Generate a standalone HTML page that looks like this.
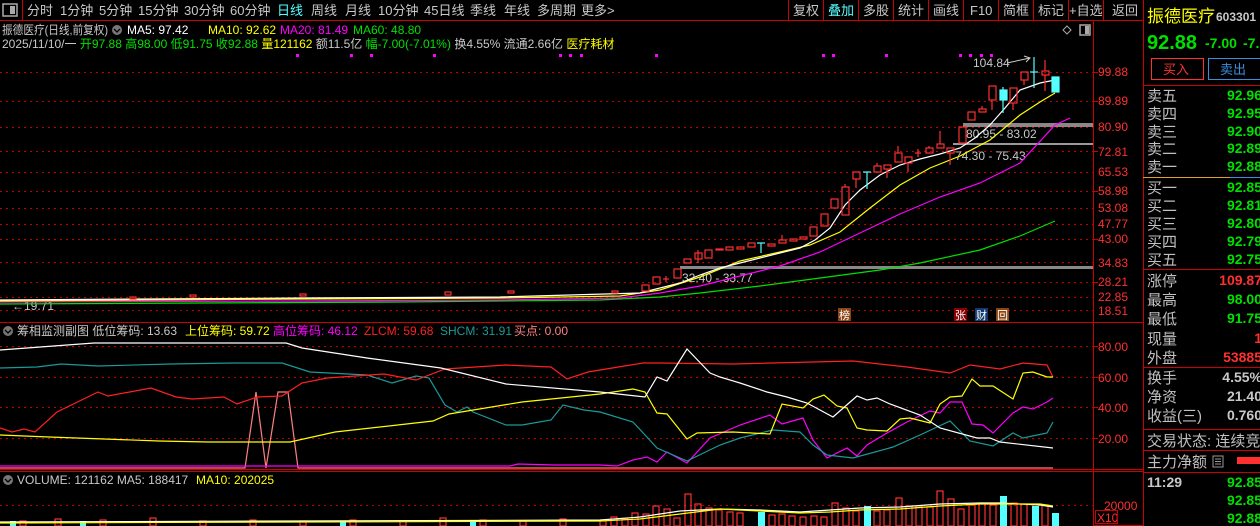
<!DOCTYPE html>
<html><head><meta charset="utf-8"><style>
html,body{margin:0;padding:0;background:#000;width:1260px;height:526px;overflow:hidden}
svg{display:block}
text{font-family:"Liberation Sans","Noto Sans CJK SC",sans-serif}
</style></head><body>
<svg width="1260" height="526" viewBox="0 0 1260 526" xmlns="http://www.w3.org/2000/svg">
<rect width="1260" height="526" fill="#000"/>
<g font-size="13" fill="#c8c8c8">
<rect x="3" y="4" width="14" height="12" fill="none" stroke="#aaa" stroke-width="1.5"/><rect x="10" y="6" width="5" height="8" fill="#aaa"/>
<line x1="22.5" y1="0" x2="22.5" y2="20" stroke="#c00" />
<text x="27" y="15">分时</text><text x="60" y="15">1分钟</text><text x="99" y="15">5分钟</text><text x="138" y="15">15分钟</text><text x="184" y="15">30分钟</text><text x="230" y="15">60分钟</text><text x="277" y="15" fill="#54ffff">日线</text><text x="311" y="15">周线</text><text x="345" y="15">月线</text><text x="378" y="15">10分钟</text><text x="424" y="15">45日线</text><text x="470" y="15">季线</text><text x="504" y="15">年线</text><text x="537" y="15">多周期</text><text x="581" y="15">更多&gt;</text>
<text x="793" y="15">复权</text><text x="828" y="15" fill="#54ffff">叠加</text><text x="863" y="15">多股</text><text x="898" y="15">统计</text><text x="933" y="15">画线</text><text x="970" y="15">F10</text><text x="1003" y="15">简框</text><text x="1038" y="15">标记</text><text x="1069" y="15">+自选</text><text x="1112" y="15">返回</text>
</g>
<g stroke="#c00" stroke-width="1">
<line x1="788.5" y1="0" x2="788.5" y2="20"/><line x1="823.5" y1="0" x2="823.5" y2="20"/><line x1="858.5" y1="0" x2="858.5" y2="20"/><line x1="893.5" y1="0" x2="893.5" y2="20"/><line x1="928.5" y1="0" x2="928.5" y2="20"/><line x1="963.5" y1="0" x2="963.5" y2="20"/><line x1="998.5" y1="0" x2="998.5" y2="20"/><line x1="1033.5" y1="0" x2="1033.5" y2="20"/><line x1="1068.5" y1="0" x2="1068.5" y2="20"/><line x1="1103.5" y1="0" x2="1103.5" y2="20"/>
<line x1="0" y1="20.5" x2="1143" y2="20.5"/>
<line x1="1093.5" y1="20" x2="1093.5" y2="526"/>
<line x1="1143.5" y1="0" x2="1143.5" y2="526"/>
<line x1="0" y1="322.5" x2="1143" y2="322.5"/>
<line x1="0" y1="469.5" x2="1143" y2="469.5"/>
<line x1="0" y1="471.5" x2="1143" y2="471.5"/>
<line x1="1094" y1="525.5" x2="1143" y2="525.5"/>
</g>
<g font-size="12">
<text x="2" y="34" fill="#c8c8c8" textLength="106" lengthAdjust="spacingAndGlyphs">振德医疗(日线,前复权)</text>
<circle cx="117" cy="30" r="5" fill="#777"/><path d="M114 29 L117 32 L120 29" stroke="#000" fill="none" stroke-width="1.3"/>
<text x="127" y="34" fill="#fff">MA5: 97.42</text><text x="208" y="34" fill="#ffff00">MA10: 92.62</text><text x="280" y="34" fill="#ff00ff">MA20: 81.49</text><text x="353" y="34" fill="#00e000">MA60: 48.80</text>
<text x="2" y="48" fill="#c8c8c8">2025/11/10/一 <tspan fill="#00e000">开97.88 高98.00 低91.75 收92.88</tspan> <tspan fill="#ffff00">量121162</tspan> 额11.5亿 <tspan fill="#00e000">幅-7.00(-7.01%)</tspan> 换4.55% 流通2.66亿 <tspan fill="#ffff00">医疗耗材</tspan></text>
</g>
<g fill="none" stroke="#aaa"><path d="M1067 26 L1071 30 L1067 34 L1063 30Z"/><rect x="1080" y="25" width="10" height="10" stroke-width="1.5"/></g><rect x="1085" y="26" width="4" height="8" fill="#aaa"/>
<g fill="#ff00ff"><rect x="296" y="54" width="3" height="3"/><rect x="350" y="54" width="3" height="3"/><rect x="370" y="54" width="3" height="3"/><rect x="433" y="54" width="3" height="3"/><rect x="559" y="54" width="3" height="3"/><rect x="569" y="54" width="3" height="3"/><rect x="580" y="54" width="3" height="3"/><rect x="655" y="54" width="3" height="3"/><rect x="822" y="54" width="3" height="3"/><rect x="832" y="54" width="3" height="3"/><rect x="885" y="54" width="3" height="3"/><rect x="959" y="54" width="3" height="3"/><rect x="969" y="54" width="3" height="3"/><rect x="980" y="54" width="3" height="3"/><rect x="990" y="54" width="3" height="3"/></g>
<g stroke="#c00000" stroke-dasharray="2,4" stroke-width="1">
<line x1="0" y1="72.5" x2="1093" y2="72.5"/><line x1="0" y1="101.5" x2="1093" y2="101.5"/><line x1="0" y1="127.5" x2="1093" y2="127.5"/><line x1="0" y1="151.5" x2="1093" y2="151.5"/><line x1="0" y1="172.5" x2="1093" y2="172.5"/><line x1="0" y1="191.5" x2="1093" y2="191.5"/><line x1="0" y1="208.5" x2="1093" y2="208.5"/><line x1="0" y1="224.5" x2="1093" y2="224.5"/><line x1="0" y1="239.5" x2="1093" y2="239.5"/><line x1="0" y1="262.5" x2="1093" y2="262.5"/><line x1="0" y1="282.5" x2="1093" y2="282.5"/><line x1="0" y1="297.5" x2="1093" y2="297.5"/><line x1="0" y1="310.5" x2="1093" y2="310.5"/>
<line x1="0" y1="346.5" x2="1093" y2="346.5"/><line x1="0" y1="377.5" x2="1093" y2="377.5"/><line x1="0" y1="407.5" x2="1093" y2="407.5"/><line x1="0" y1="438.5" x2="1093" y2="438.5"/>
<line x1="0" y1="505.5" x2="1093" y2="505.5"/>
</g>
<g font-size="12" fill="#ff3030">
<text x="1098" y="76">99.88</text><text x="1098" y="105">89.89</text><text x="1098" y="131">80.90</text><text x="1098" y="156">72.81</text><text x="1098" y="176">65.53</text><text x="1098" y="195">58.98</text><text x="1098" y="212">53.08</text><text x="1098" y="228">47.77</text><text x="1098" y="243">43.00</text><text x="1098" y="267">34.83</text><text x="1098" y="286">28.21</text><text x="1098" y="301">22.85</text><text x="1098" y="315">18.51</text>
<text x="1098" y="351">80.00</text><text x="1098" y="382">60.00</text><text x="1098" y="412">40.00</text><text x="1098" y="443">20.00</text>
<text x="1104" y="510">20000</text><text x="1097" y="522">X10</text>
</g>
<rect x="1095.5" y="510.5" width="22" height="13" fill="none" stroke="#c00"/>
<g stroke="#c00"><line x1="1094" y1="72.5" x2="1098" y2="72.5"/><line x1="1094" y1="101.5" x2="1098" y2="101.5"/><line x1="1094" y1="151.5" x2="1098" y2="151.5"/><line x1="1094" y1="191.5" x2="1098" y2="191.5"/><line x1="1094" y1="239.5" x2="1098" y2="239.5"/><line x1="1094" y1="282.5" x2="1098" y2="282.5"/><line x1="1094" y1="346.5" x2="1098" y2="346.5"/><line x1="1094" y1="377.5" x2="1098" y2="377.5"/><line x1="1094" y1="407.5" x2="1098" y2="407.5"/><line x1="1094" y1="438.5" x2="1098" y2="438.5"/></g>
<rect x="963" y="123" width="130" height="4" fill="#888"/>
<rect x="953" y="143" width="140" height="2" fill="#999"/>
<rect x="680" y="266" width="413" height="3" fill="#888"/>
<g font-size="12" fill="#c8c8c8"><text x="966" y="138">80.95 - 83.02</text><text x="955" y="160">74.30 - 75.43</text><text x="682" y="282">32.40 - 33.77</text><text x="973" y="67">104.84</text><text x="12" y="310">←19.71</text></g>
<path d="M1007 63 L1030 58 M1024 56 L1030 58 L1026 62" stroke="#ccc" fill="none"/>
<g fill="none" stroke-width="1.2">
<polyline stroke="#00e000" points="0,304 200,303 400,302 600,300 660,297 700,293 760,286 820,278 880,270 920,263 980,250 1020,236 1055,221"/>
<polyline stroke="#ff00ff" points="0,302 300,301 500,300 620,298 660,293 700,286 740,276 780,266 820,252 860,233 900,214 940,197 980,183 1020,163 1055,125 1070,118"/>
<polyline stroke="#ffff00" points="0,301 300,299 500,298 620,296 660,290 700,277 740,261 780,252 810,245 840,232 870,208 900,185 930,168 960,156 990,140 1020,115 1040,102 1055,93"/>
<polyline stroke="#ffffff" points="0,300 300,298 500,297 640,293 680,283 700,275 720,268 760,258 800,248 815,240 830,228 845,205 860,190 880,175 900,165 920,159 940,154 960,148 975,138 990,125 1005,108 1020,90 1040,83 1055,80"/>
</g>
<g fill="none" stroke="#ff3030" stroke-width="1.2">
<rect x="130" y="297" width="6" height="2"/><rect x="190" y="295" width="6" height="2"/><rect x="300" y="294" width="6" height="2"/><rect x="445" y="292" width="6" height="3"/><rect x="508" y="291" width="6" height="2"/><rect x="612" y="291" width="6" height="2"/>
<rect x="642" y="285" width="7" height="6"/><rect x="653" y="277" width="7" height="7"/><line x1="666" y1="276" x2="666" y2="282"/><line x1="663" y1="279" x2="669" y2="279"/>
<rect x="674" y="269" width="7" height="9"/><rect x="684" y="259" width="7" height="4"/><rect x="695" y="253" width="7" height="6"/><line x1="698" y1="250" x2="698" y2="263"/><rect x="705" y="250" width="7" height="8"/>
<rect x="716" y="249" width="7" height="1"/><rect x="726" y="247" width="7" height="3"/><rect x="737" y="247" width="7" height="2"/><rect x="748" y="243" width="7" height="4"/><rect x="768" y="244" width="7" height="2"/><rect x="779" y="240" width="7" height="3"/><line x1="782" y1="235" x2="782" y2="240"/><rect x="790" y="239" width="7" height="2"/><rect x="800" y="237" width="7" height="2"/><rect x="810" y="227" width="7" height="9"/><rect x="821" y="214" width="7" height="12"/><rect x="831" y="199" width="7" height="9"/><rect x="842" y="187" width="7" height="28"/><line x1="845" y1="184" x2="845" y2="187"/>
<rect x="853" y="172" width="7" height="7"/><line x1="856" y1="179" x2="856" y2="188"/><rect x="874" y="166" width="7" height="6"/><line x1="877" y1="163" x2="877" y2="166"/><rect x="884" y="165" width="7" height="4"/><line x1="887" y1="169" x2="887" y2="178"/><rect x="895" y="153" width="7" height="9"/><line x1="898" y1="146" x2="898" y2="153"/><rect x="905" y="157" width="7" height="6"/><line x1="908" y1="163" x2="908" y2="172"/><line x1="918" y1="149" x2="918" y2="157"/><line x1="915" y1="153" x2="921" y2="153"/><rect x="926" y="148" width="7" height="5"/><line x1="929" y1="146" x2="929" y2="148"/><rect x="937" y="144" width="7" height="4"/><line x1="940" y1="131" x2="940" y2="144"/><rect x="947" y="148" width="7" height="5"/><line x1="950" y1="153" x2="950" y2="165"/>
<rect x="959" y="127" width="7" height="16"/><rect x="968" y="112" width="7" height="8"/><rect x="979" y="109" width="7" height="3"/><line x1="982" y1="106" x2="982" y2="109"/><rect x="989" y="86" width="7" height="14"/><line x1="992" y1="100" x2="992" y2="110"/><rect x="1010" y="88" width="7" height="15"/><line x1="1013" y1="103" x2="1013" y2="110"/><rect x="1021" y="72" width="7" height="8"/><line x1="1024" y1="80" x2="1024" y2="85"/><rect x="1042" y="71" width="7" height="4"/><line x1="1045" y1="60" x2="1045" y2="71"/><line x1="1045" y1="75" x2="1045" y2="91"/>
</g>
<g stroke="#54ffff" fill="#54ffff" stroke-width="1.2">
<line x1="761" y1="243" x2="761" y2="253"/><line x1="757" y1="243" x2="765" y2="243"/>
<line x1="867" y1="172" x2="867" y2="189"/><line x1="863" y1="172" x2="871" y2="172"/>
<rect x="1000" y="90" width="7" height="10"/><line x1="1003" y1="87" x2="1003" y2="113"/>
<line x1="1034" y1="57" x2="1034" y2="88"/><line x1="1030" y1="72" x2="1038" y2="72"/>
<rect x="1052" y="77" width="7" height="15"/>
</g>
<g font-size="11" fill="#fff">
<rect x="838" y="308" width="13" height="13" fill="#8b4513"/><text x="839" y="319">榜</text>
<rect x="954" y="308" width="13" height="13" fill="#8b0000"/><text x="955" y="319">张</text>
<rect x="975" y="308" width="13" height="13" fill="#123a70"/><text x="976" y="319">财</text>
<rect x="996" y="308" width="13" height="13" fill="#8b4513"/><text x="997" y="319">回</text>
</g>
<g font-size="12">
<circle cx="8" cy="331" r="5" fill="#777"/><path d="M5 330 L8 333 L11 330" stroke="#000" fill="none" stroke-width="1.3"/>
<text x="17" y="335" fill="#c8c8c8">筹相监测副图  低位筹码: 13.63</text>
<text x="185" y="335" fill="#ffff00">上位筹码: 59.72</text>
<text x="273" y="335" fill="#ff00ff">高位筹码: 46.12</text>
<text x="364" y="335" fill="#ff2020">ZLCM: 59.68</text>
<text x="440" y="335" fill="#1a9a9a">SHCM: 31.91</text>
<text x="514" y="335" fill="#ff8080">买点: 0.00</text>
<circle cx="8" cy="480" r="5" fill="#777"/><path d="M5 479 L8 482 L11 479" stroke="#000" fill="none" stroke-width="1.3"/>
<text x="17" y="484" fill="#c8c8c8">VOLUME: 121162  MA5: 188417</text>
<text x="196" y="484" fill="#ffff00">MA10: 202025</text>
</g>
<g fill="none" stroke-width="1.2">
<polyline stroke="#ff8080" points="0,468 245,468 256,392 266,468 278,392 288,392 298,468 1053,468"/>
<polyline stroke="#ff00ff" points="0,466 510,466 518,464 555,465 600,465 617,466 633,460 647,457 657,462 667,452 687,463 710,438 740,425 770,415 782,424 803,418 813,440 827,458 847,448 857,456 867,445 887,433 907,422 930,411 940,413 950,402 962,402 972,424 983,425 993,433 1013,413 1023,407 1033,409 1047,402 1053,398"/>
<polyline stroke="#1a9a9a" points="0,368 37,367 61,364 98,366 171,364 233,363 282,363 310,372 367,375 392,383 416,376 429,378 445,405 457,412 467,407 473,412 506,425 522,425 551,420 563,405 584,410 600,412 633,422 657,448 687,461 720,445 740,438 773,430 800,432 813,445 827,455 853,458 893,447 920,435 950,421 970,441 993,446 1013,433 1023,438 1047,433 1053,422"/>
<polyline stroke="#ff2020" points="0,428 12,432 24,429 35,432 57,412 98,392 108,396 151,388 176,397 192,399 224,397 237,404 257,397 282,396 302,383 327,378 384,374 416,380 445,369 506,365 551,367 567,379 588,372 600,370 643,363 660,363 733,364 853,361 907,367 950,373 970,365 1000,369 1023,363 1047,365 1053,377"/>
<polyline stroke="#ffff00" points="0,435 49,437 104,439 159,441 208,442 290,442 335,432 433,421 449,414 522,402 600,394 633,389 645,392 657,413 667,414 687,439 697,433 733,432 770,434 782,404 803,408 813,399 824,395 837,406 847,408 857,428 867,430 887,431 900,419 910,418 930,423 940,404 950,397 962,396 972,379 980,386 993,386 1013,399 1023,373 1033,372 1047,377 1053,377"/>
<polyline stroke="#ffffff" points="0,350 94,343 286,343 302,348 367,358 441,368 506,384 600,392 645,397 657,377 667,381 687,349 710,373 720,377 740,383 767,392 787,397 807,403 833,417 857,396 867,400 877,398 890,404 920,415 940,428 977,438 990,438 1000,442 1053,448"/>
</g>
<g fill="none" stroke="#ff3030" stroke-width="1.2">
<rect x="20" y="521" width="6" height="5"/><rect x="55" y="519" width="6" height="7"/><rect x="100" y="520" width="6" height="6"/><rect x="150" y="518" width="6" height="8"/><rect x="200" y="521" width="6" height="5"/><rect x="250" y="520" width="6" height="6"/><rect x="300" y="521" width="6" height="5"/><rect x="350" y="520" width="6" height="6"/><rect x="400" y="521" width="6" height="5"/><rect x="440" y="518" width="6" height="8"/><rect x="480" y="520" width="6" height="6"/><rect x="520" y="521" width="6" height="5"/><rect x="560" y="519" width="6" height="7"/><rect x="600" y="521" width="6" height="5"/>
<rect x="611" y="517" width="6" height="9"/><rect x="622" y="519" width="6" height="7"/><rect x="632" y="513" width="6" height="13"/><rect x="643" y="514" width="6" height="12"/><rect x="653" y="506" width="6" height="20"/><rect x="664" y="509" width="6" height="17"/><rect x="674" y="518" width="6" height="8"/><rect x="685" y="494" width="6" height="32"/><rect x="695" y="504" width="6" height="22"/><rect x="706" y="508" width="6" height="18"/><rect x="716" y="510" width="6" height="16"/><rect x="727" y="512" width="6" height="14"/><rect x="737" y="513" width="6" height="13"/><rect x="769" y="515" width="6" height="11"/><rect x="779" y="514" width="6" height="12"/><rect x="789" y="516" width="6" height="10"/><rect x="800" y="517" width="6" height="9"/><rect x="811" y="516" width="6" height="10"/><rect x="821" y="517" width="6" height="9"/><rect x="832" y="503" width="6" height="23"/><rect x="843" y="508" width="6" height="18"/><rect x="853" y="511" width="6" height="15"/><rect x="874" y="511" width="6" height="15"/><rect x="884" y="510" width="6" height="16"/><rect x="896" y="498" width="6" height="28"/><rect x="906" y="506" width="6" height="20"/><rect x="916" y="506" width="6" height="20"/><rect x="927" y="507" width="6" height="19"/><rect x="937" y="491" width="6" height="35"/><rect x="948" y="499" width="6" height="27"/><rect x="958" y="509" width="6" height="17"/><rect x="969" y="505" width="6" height="21"/><rect x="979" y="503" width="6" height="23"/><rect x="990" y="505" width="6" height="21"/><rect x="1011" y="503" width="6" height="23"/><rect x="1021" y="504" width="6" height="22"/><rect x="1042" y="505" width="6" height="21"/>
</g>
<g fill="#54ffff"><rect x="10" y="521" width="6" height="5"/><rect x="80" y="521" width="6" height="5"/><rect x="340" y="521" width="6" height="5"/><rect x="470" y="521" width="6" height="5"/><rect x="758" y="512" width="7" height="14"/><rect x="864" y="506" width="7" height="20"/><rect x="1000" y="496" width="7" height="30"/><rect x="1032" y="506" width="7" height="20"/><rect x="1052" y="513" width="7" height="13"/></g>
<g fill="none" stroke-width="1.2">
<polyline stroke="#ffffff" points="0,522 300,521 600,520 640,517 680,511 720,509 760,510 800,512 830,510 860,508 900,507 940,504 980,503 1000,503 1040,505 1053,507"/>
<polyline stroke="#ffff00" points="0,523 300,522 600,521 640,519 680,514 720,509 760,511 800,513 830,512 860,510 900,509 940,506 980,504 1040,504 1053,506"/>
</g>
<g>
<text x="1147" y="22" font-size="17" fill="#ffff00">振德医疗</text>
<text x="1216" y="21" font-size="12" font-weight="bold" fill="#c8c8c8">603301</text>
<text x="1147" y="49" font-size="20" font-weight="bold" fill="#00e000">92.88</text>
<text x="1205" y="48" font-size="14" font-weight="bold" fill="#00e000">-7.00</text>
<text x="1243" y="48" font-size="14" font-weight="bold" fill="#00e000">-7.</text>
<rect x="1151.5" y="58.5" width="52" height="21" fill="none" stroke="#ff3030"/>
<rect x="1208.5" y="58.5" width="52" height="21" fill="none" stroke="#3a8ee0"/>
<text x="1163" y="74" font-size="13" fill="#ff3030">买入</text>
<text x="1220" y="74" font-size="13" fill="#3a8ee0">卖出</text>
</g>
<g stroke="#c00"><line x1="1143" y1="85.5" x2="1260" y2="85.5"/><line x1="1143" y1="269.5" x2="1260" y2="269.5"/><line x1="1143" y1="367.5" x2="1260" y2="367.5"/><line x1="1143" y1="429.5" x2="1260" y2="429.5"/><line x1="1143" y1="450.5" x2="1260" y2="450.5"/><line x1="1143" y1="472.5" x2="1260" y2="472.5"/></g>
<line x1="1143" y1="177.5" x2="1230" y2="177.5" stroke="#e0a020"/><line x1="1230" y1="177.5" x2="1260" y2="177.5" stroke="#3a8ee0"/>
<g font-size="15" fill="#c0c0c0">
<text x="1147" y="101">卖五</text><text x="1147" y="119">卖四</text><text x="1147" y="137">卖三</text><text x="1147" y="154">卖二</text><text x="1147" y="172">卖一</text>
<text x="1147" y="193">买一</text><text x="1147" y="211">买二</text><text x="1147" y="229">买三</text><text x="1147" y="247">买四</text><text x="1147" y="265">买五</text>
<text x="1147" y="286">涨停</text><text x="1147" y="305">最高</text><text x="1147" y="324">最低</text><text x="1147" y="344">现量</text><text x="1147" y="363">外盘</text>
<text x="1147" y="383">换手</text><text x="1147" y="402">净资</text><text x="1147" y="421">收益(三)</text>
<text x="1147" y="446">交易状态: 连续竞</text>
<text x="1147" y="467">主力净额</text>
</g>
<rect x="1213" y="456" width="10" height="11" fill="none" stroke="#999"/><g stroke="#999"><line x1="1215" y1="459" x2="1221" y2="459"/><line x1="1215" y1="461.5" x2="1221" y2="461.5"/><line x1="1215" y1="464" x2="1221" y2="464"/></g>
<rect x="1237" y="457" width="23" height="7" fill="#ff3030"/>
<g font-size="14" font-weight="bold" fill="#00e000" text-anchor="end">
<text x="1262" y="100">92.96</text><text x="1262" y="118">92.95</text><text x="1262" y="136">92.90</text><text x="1262" y="153">92.89</text><text x="1262" y="171">92.88</text>
<text x="1262" y="192">92.85</text><text x="1262" y="210">92.81</text><text x="1262" y="228">92.80</text><text x="1262" y="246">92.79</text><text x="1262" y="264">92.75</text>
<text x="1262" y="285" fill="#ff3030">109.87</text><text x="1262" y="304">98.00</text><text x="1262" y="323">91.75</text><text x="1262" y="343" fill="#ff3030">1</text><text x="1262" y="362" fill="#ff3030">53885</text>
<text x="1262" y="382" fill="#c8c8c8">4.55%</text><text x="1262" y="401" fill="#c8c8c8">21.40</text><text x="1262" y="420" fill="#c8c8c8">0.760</text>
<text x="1262" y="487">92.85</text><text x="1262" y="505">92.85</text><text x="1262" y="523">92.88</text>
</g>
<text x="1147" y="487" font-size="14" font-weight="bold" fill="#c8c8c8">11:29</text>
</svg>
</body></html>
